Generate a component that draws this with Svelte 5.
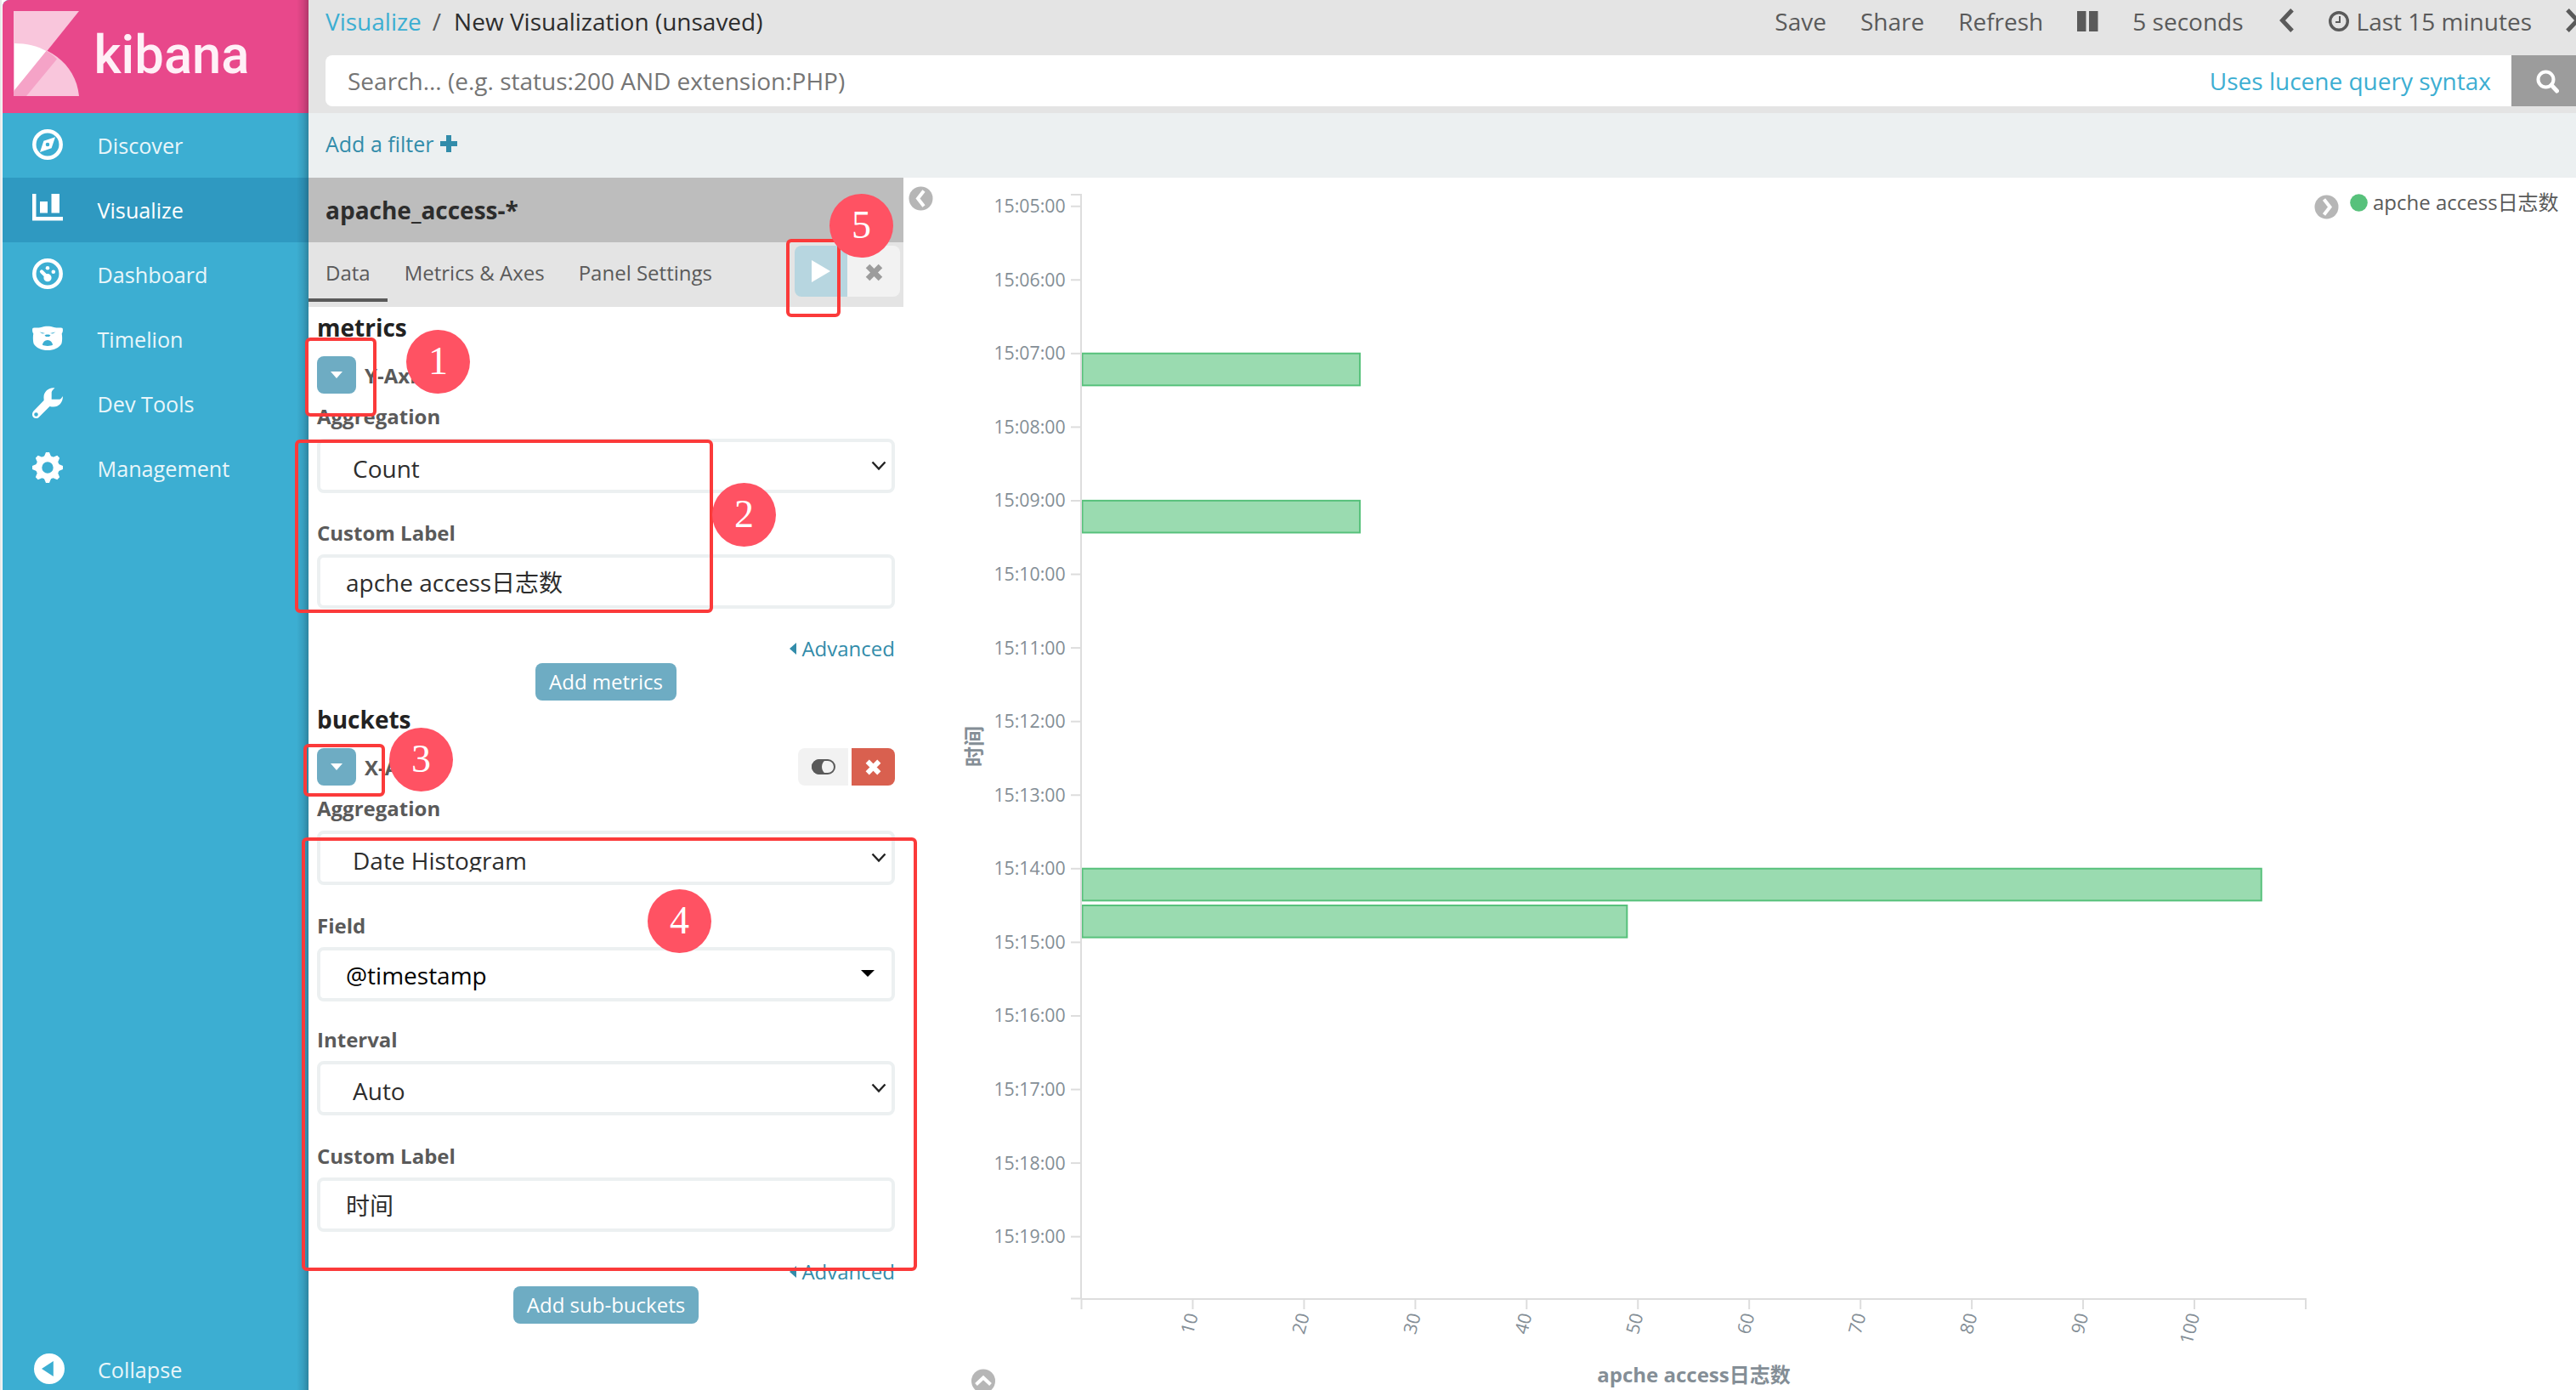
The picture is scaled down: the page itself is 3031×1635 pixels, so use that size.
<script>
  const nav = ['Discover', 'Visualize', 'Dashboard', 'Timelion', 'Dev Tools', 'Management'];
  const teeth = [0, 45, 90, 135, 180, 225, 270, 315];

  const times = Array.from({ length: 15 }, (_, i) => ({
    label: `15:${String(i + 5).padStart(2, '0')}:00`,
    y: 242.7 + i * 86.57
  }));
  const counts = Array.from({ length: 10 }, (_, i) => (i + 1) * 10);
  const countX = (n) => 1272.5 + n * 13.095;
  const bars = [
    { minute: 7, count: 25 },
    { minute: 9, count: 25 },
    { minute: 14, count: 106 },
    { minute: 14.5, count: 49 }
  ].map((b) => ({ y: 242.7 + (b.minute - 5) * 86.57 - 0.1, w: countX(b.count) - 1273 - 0.3 }));

  const frames = [
    { x: 359, y: 397, w: 84, h: 93 },
    { x: 347, y: 517, w: 492, h: 204 },
    { x: 357, y: 875, w: 96, h: 62 },
    { x: 355, y: 985, w: 724, h: 510 },
    { x: 925, y: 281, w: 64, h: 92 }
  ];
  const steps = [
    { n: 1, x: 478, y: 387.5 },
    { n: 2, x: 838, y: 567.5 },
    { n: 3, x: 458, y: 855.5 },
    { n: 4, x: 762, y: 1045.5 },
    { n: 5, x: 976, y: 227.5 }
  ];
</script>

{#snippet caret()}
  <button class="caret-btn" aria-label="toggle">
    <svg width="14" height="8" viewBox="0 0 14 8"><path d="M0 0h14L7 8z" fill="#fff" /></svg>
  </button>
{/snippet}

{#snippet select(value)}
  <div class="field select">
    <span>{value}</span>
    <svg width="18" height="12" viewBox="0 0 18 12"><path d="M1.500 1.500L9 9.500l7.500-8" fill="none" stroke="#222" stroke-width="2.400" /></svg>
  </div>
{/snippet}

{#snippet cross(color, size)}
  <svg width={size} height={size} viewBox="0 0 20 20"><path d="M3.500 3.500l13 13M16.500 3.500l-13 13" stroke={color} stroke-width="5.600" stroke-linecap="butt" /></svg>
{/snippet}

{#snippet advanced()}
  <div class="advanced">
    <svg width="8" height="14" viewBox="0 0 8 14"><path d="M8 0v14L0 7z" fill="#328caa" /></svg>
    <span>Advanced</span>
  </div>
{/snippet}

<div class="page">
  <aside class="sidebar">
    <div class="brand">
      <svg width="360" height="133" viewBox="0 0 360 133">
        <path d="M13 13h77L13 109z" fill="#f9c6dc" />
        <path d="M13 51c38 0 73 22 77 62H13z" fill="#f9c6dc" />
        <path d="M14 51c14 0 27 3 37.500 9L14 106z" fill="#fff" />
        <path d="M51.500 60c5 2.500 9 5.500 12.500 9.500L28 113H13v-5.500z" fill="#f5a3c7" />
        <text x="107.500" y="86" class="wordmark" textLength="183" lengthAdjust="spacingAndGlyphs">kibana</text>
      </svg>
    </div>
    {#each nav as item}
      <div class="nav-item" class:active={item === 'Visualize'}>
        <svg width="36" height="36" viewBox="0 0 36 36" fill="#fff">
          {#if item === 'Discover'}
            <circle cx="18" cy="18" r="15.700" fill="none" stroke="#fff" stroke-width="4.500" />
            <path fill-rule="evenodd" d="M27 9.200L22.600 22.300 9 27l4.400-13.300zM18 15.700a2.300 2.300 0 1 0 0 4.600 2.300 2.300 0 0 0 0-4.600z" />
          {:else if item === 'Visualize'}
            <path d="M0 0h4.500v27H36v4.500H0zM9 9h9v13.500H9zM22.500 0H32v22.500h-9.500z" />
          {:else if item === 'Dashboard'}
            <circle cx="18" cy="18" r="15.700" fill="none" stroke="#fff" stroke-width="4.500" />
            <circle cx="18" cy="11.200" r="2.300" />
            <circle cx="24.800" cy="15.700" r="2.300" />
            <circle cx="18" cy="22.700" r="4.600" />
            <path d="M11 15.500l7 7" stroke="#fff" stroke-width="4.200" stroke-linecap="round" />
          {:else if item === 'Timelion'}
            <path fill-rule="evenodd" d="M.5 6C2 5 7 6 10.500 5c4.500-1.800 10.500-1.800 15 0C29 6 34 5 35.500 6c.8 1.500.6 4.500-.8 6.500.6 3 .7 8-.2 11.500C31.500 29.500 25 32 18 32S4.500 29.500 1.500 24c-.9-3.500-.8-8.500-.2-11.500C-.1 10.500-.3 7.500.5 6zM8.500 10.500l3.500 2 3-.5zM27.500 10.500l-3.500 2-3-.5zM14.500 14.200l1.500 1.800h4l1.500-1.800-2-.700h-3zM18 20c-3 0-6 3-6 5.800 2 1.500 10 1.500 12 0 0-2.800-3-5.800-6-5.800z" />
          {:else if item === 'Dev Tools'}
            <path fill-rule="evenodd" d="M26.500.3C19-.9 13 5 13.500 12c0 1.500.3 2.500.1 3L1.500 27.500C-1.500 31 0 36 4.500 36c1.500 0 2.600-.5 3.500-1.500L20.500 22c1.500.4 2.700.6 4.500.6 6 0 11-5 11-12.600-1.800 2.500-2.600 3.500-4 3.800h-9.300V5.500c.3-2 2.200-3.500 3.800-5.200zM4.500 29.200a2.300 2.300 0 1 1 0 4.600 2.300 2.300 0 0 1 0-4.600z" />
          {:else}
            <circle cx="18" cy="18" r="10.300" fill="none" stroke="#fff" stroke-width="7.200" />
            {#each teeth as angle}
              <path transform="rotate({angle} 18 18)" d="M13.500 6L16 0h4l2.500 6z" />
            {/each}
          {/if}
        </svg>
        <span>{item}</span>
      </div>
    {/each}
    <div class="nav-item collapse">
      <svg width="36" height="36" viewBox="0 0 36 36"><circle cx="18" cy="18" r="18" fill="#fff" /><path d="M22.800 9v18L9 18z" fill="#3caed2" /></svg>
      <span>Collapse</span>
    </div>
  </aside>

  <main>
    <header>
      <div class="top-row">
        <a class="crumb">Visualize</a><span class="slash">/</span><span class="current">New Visualization (unsaved)</span>
        <div class="tools">
          <span>Save</span>
          <span>Share</span>
          <span>Refresh</span>
          <svg width="25" height="24" viewBox="0 0 25 24"><path d="M0 0h10.500v24H0zM14 0h10.500v24H14z" fill="#5a5a5a" /></svg>
          <span>5 seconds</span>
          <svg class="chev" width="20" height="28" viewBox="0 0 20 28"><path d="M17 1.800L5.500 14 17 26.200" fill="none" stroke="#5a5a5a" stroke-width="5" /></svg>
          <span class="range">
            <svg width="24" height="24" viewBox="0 0 24 24" fill="none" stroke="#5a5a5a"><circle cx="12" cy="12" r="10.300" stroke-width="3.400" /><path d="M13 6v7H8" stroke-width="2" /></svg>
            Last 15 minutes
          </span>
          <svg class="chev" width="20" height="28" viewBox="0 0 20 28"><path d="M2 1.800L13.500 14 2 26.200" fill="none" stroke="#5a5a5a" stroke-width="5" /></svg>
        </div>
      </div>
      <div class="search">
        <div class="query"><span>Search... (e.g. status:200 AND extension:PHP)</span><a>Uses lucene query syntax</a></div>
        <button aria-label="search">
          <svg width="28" height="28" viewBox="0 0 28 28" fill="none" stroke="#fff"><circle cx="12.500" cy="11.500" r="9" stroke-width="4" /><path d="M19 18l6.500 7" stroke-width="5" stroke-linecap="round" /></svg>
        </button>
      </div>
    </header>
    <div class="filters">
      <a>Add a filter</a>
      <svg width="20" height="20" viewBox="0 0 20 20"><path d="M7 0h6v7h7v6h-7v7H7v-7H0V7h7z" fill="#328caa" /></svg>
    </div>

    <div class="work">
      <section class="editor">
        <h1>apache_access-*</h1>
        <div class="tabs">
          <span class="tab selected">Data</span>
          <span class="tab">Metrics &amp; Axes</span>
          <span class="tab">Panel Settings</span>
          <div class="actions">
            <button class="play" aria-label="apply"><svg width="22" height="26" viewBox="0 0 22 26"><path d="M0 0l22 13L0 26z" fill="#fff" /></svg></button>
            <button class="discard" aria-label="discard">{@render cross('#9c9c9c', 23)}</button>
          </div>
        </div>
        <div class="form">
          <h2 class="first">metrics</h2>
          <div class="agg">{@render caret()}<b>Y-Axis</b></div>
          <label class="agg-label">Aggregation</label>
          {@render select('Count')}
          <label class="gap-20">Custom Label</label>
          <div class="field"><span>apche access日志数</span></div>
          {@render advanced()}
          <button class="add">Add metrics</button>
          <h2>buckets</h2>
          <div class="agg second">
            {@render caret()}<b>X-Axis</b>
            <div class="agg-actions">
              <button class="toggle" aria-label="disable"><svg width="28" height="18" viewBox="0 0 28 18"><rect x="1" y="1" width="26" height="16" rx="8" fill="#f2f2f2" stroke="#5a5a5a" stroke-width="2" /><path d="M18 0H9a9 9 0 0 0 0 18h9c-8-3-8-15 0-18z" fill="#5a5a5a" /></svg></button>
              <button class="remove" aria-label="remove">{@render cross('#fff', 21)}</button>
            </div>
          </div>
          <label class="agg-label">Aggregation</label>
          {@render select('Date Histogram')}
          <label class="gap-21">Field</label>
          <div class="field combo">
            <span>@timestamp</span>
            <svg width="16" height="8" viewBox="0 0 16 8"><path d="M0 0h16L8 8z" fill="#000" /></svg>
          </div>
          <label class="gap-18">Interval</label>
          {@render select('Auto')}
          <label class="gap-21">Custom Label</label>
          <div class="field"><span>时间</span></div>
          {@render advanced()}
          <button class="add">Add sub-buckets</button>
        </div>
      </section>

      <svg class="chart" width="1968" height="1426" viewBox="1063 209 1968 1426">
        <g fill="none" stroke="#fff" stroke-width="4">
          <circle cx="1083.500" cy="233.500" r="14" fill="#b6b6b6" stroke="none" />
          <path d="M1087 224.500l-7 9 7 9" />
          <circle cx="2737.500" cy="243.500" r="14" fill="#b6b6b6" stroke="none" />
          <path d="M2734.500 234.500l7 9-7 9" />
          <circle cx="1157" cy="1624.500" r="14" fill="#b6b6b6" stroke="none" />
          <path d="M1148.500 1628.500l8.500-8 8.500 8" />
        </g>
        <circle cx="2775.500" cy="238.500" r="10.300" fill="#57c17b" />
        <text x="2792" y="247" class="legend">apche access日志数</text>

        <g fill="#9adbb0" stroke="#57c17b" stroke-width="2">
          {#each bars as bar}
            <rect x="1273.500" y={bar.y} width={bar.w} height="37.600" />
          {/each}
        </g>
        <path d="M1260 229h12v1298.500h-12M1272 1528h1441v12M1272.500 1528v12" fill="none" stroke="#ddd" stroke-width="2" />
        {#each times as t}
          <path d="M1260 {t.y}h12" stroke="#ddd" stroke-width="2" />
          <text x="1253.700" y={t.y + 7.5} text-anchor="end" class="tick">{t.label}</text>
        {/each}
        {#each counts as n}
          <path d="M{countX(n)} 1528v12" stroke="#ddd" stroke-width="2" />
          <text text-anchor="end" dy="7.500" class="tick" transform="translate({countX(n) - 0.8} 1545) rotate(-75)">{n}</text>
        {/each}
        <text text-anchor="middle" class="axis-title" transform="translate(1155 878) rotate(-90)">时间</text>
        <text x="1993" y="1626" text-anchor="middle" class="axis-title">apche access日志数</text>
      </svg>
    </div>
  </main>

  {#each frames as f}
    <div class="frame" style="left:{f.x}px;top:{f.y}px;width:{f.w}px;height:{f.h}px"></div>
  {/each}
  {#each steps as s}
    <div class="step" style="left:{s.x}px;top:{s.y}px">{s.n}</div>
  {/each}
</div>

<style>
  .page {
    position: relative;
    display: flex;
    width: 3031px;
    height: 1635px;
    overflow: hidden;
    background: #fff;
    color: #2d2d2d;
    font-family: 'Open Sans', 'Noto Sans CJK SC', sans-serif;
    font-size: 28px;
    box-sizing: border-box;
    padding-left: 3px;
    box-shadow: inset 2px 0 0 #e8eaea;
  }
  .page * { box-sizing: border-box; }
  button {
    display: flex;
    align-items: center;
    justify-content: center;
    border: 0;
    padding: 0;
    font-family: inherit;
    color: #fff;
  }
  svg { display: block; flex: none; }
  .sidebar {
    display: flex;
    flex-direction: column;
    width: 360px;
    flex: none;
    background: linear-gradient(to left, rgba(0, 0, 0, 0.24), rgba(0, 0, 0, 0.1) 6px, transparent 14px), #3caed2;
    border-radius: 8px 0 0 0;
    overflow: hidden;
  }
  .brand {
    height: 133px;
    background: linear-gradient(to left, rgba(0, 0, 0, 0.24), rgba(0, 0, 0, 0.1) 6px, transparent 14px), #e8488b;
  }
  .wordmark { font-family: Roboto, sans-serif; font-weight: 500; font-size: 63px; fill: #fff0f7; }
  .nav-item {
    display: flex;
    align-items: center;
    gap: 40.5px;
    height: 76px;
    padding: 0 0 0 35px;
    font-size: 25.2px;
    color: #e9f6fa;
  }
  .nav-item svg { margin-bottom: 2px; }
  .active {
    background: linear-gradient(to left, rgba(0, 0, 0, 0.24), rgba(0, 0, 0, 0.1) 6px, transparent 14px), #2f99c1;
    color: #fff;
  }
  .collapse { margin-top: auto; margin-bottom: -14px; padding-left: 37px; gap: 39px; }
  main { display: flex; flex-direction: column; flex: 1; min-width: 0; }
  header { height: 133px; flex: none; background: #e4e4e4; }
  .top-row { display: flex; align-items: center; height: 50px; padding-left: 20px; white-space: nowrap; }
  .crumb { color: #3caed2; }
  .slash { margin: 0 15px 0 13px; color: #5a5a5a; }
  .tools { display: flex; align-items: center; gap: 40px; margin-left: auto; margin-right: -8px; color: #5a5a5a; }
  .chev { margin-top: -2px; }
  .range { display: flex; align-items: center; gap: 9px; }
  .search { display: flex; height: 60px; margin-top: 15px; padding-left: 20px; }
  .query {
    display: flex;
    flex: 1;
    align-items: center;
    justify-content: space-between;
    padding: 0 24px 1px 26px;
    background: #fff;
    border-radius: 8px 0 0 8px;
    color: #757575;
  }
  .query a { color: #3caed2; }
  .search button { width: 76px; background: #9c9c9c; padding: 2px 0 0 8px; }
  .filters {
    display: flex;
    align-items: center;
    gap: 8px;
    height: 76px;
    flex: none;
    padding: 0 0 4px 20px;
    background: #ecf0f1;
    color: #328caa;
    font-size: 25px;
  }
  .work { display: flex; flex: 1; min-height: 0; }
  .editor { width: 700px; flex: none; }
  h1 { margin: 0; height: 76px; padding-left: 20px; background: #bdbdbd; font-size: 28px; line-height: 76px; }
  .tabs { display: flex; height: 76px; background: #e4e4e4; color: #5a5a5a; font-size: 24px; }
  .tab { height: 70px; padding: 0 20px; line-height: 71px; border-bottom: 4px solid transparent; }
  .selected { border-color: #5a5a5a; }
  .actions { display: flex; margin: 4px 4px 0 auto; height: 60px; border-radius: 8px; overflow: hidden; }
  .actions button { width: 62px; }
  .play { background: #b7d6e0; }
  .discard { background: #f2f2f2; }
  .actions .discard { padding-top: 2px; }
  .form { display: flex; flex-direction: column; padding: 0 10px; }
  h2 { margin: 0; height: 44px; font-size: 28px; line-height: 45px; color: #222; }
  .first { height: 48px; line-height: 49px; }
  .agg { display: flex; align-items: center; gap: 10px; height: 44px; margin-top: 10px; font-size: 24px; color: #5a5a5a; }
  .second { margin-top: 12px; }
  .caret-btn { width: 46px; height: 44px; border-radius: 8px; background: #6eacc3; }
  .agg-actions { display: flex; gap: 4px; margin-left: auto; }
  .toggle { width: 59px; height: 44px; background: #f2f2f2; border-radius: 8px 0 0 8px; }
  .remove { width: 51px; height: 44px; background: #d9604f; border-radius: 0 8px 8px 0; }
  label { height: 52px; line-height: 53px; font-size: 24px; font-weight: 700; color: #5a5a5a; }
  .agg-label { height: 53px; line-height: 53px; }
  .gap-18 { margin-top: 18px; }
  .gap-20 { margin-top: 20px; }
  .gap-21 { margin-top: 21px; }
  .field {
    display: flex;
    align-items: center;
    justify-content: space-between;
    height: 64px;
    padding: 2px 0 0 30px;
    border: 4px solid #ecf0f1;
    border-radius: 8px;
    line-height: 38px;
  }
  .select { padding: 5px 6px 0 38px; }
  .select span { clip-path: inset(0 0 5px 0); }
  .select svg { margin-bottom: 5px; }
  .combo { padding-right: 20px; color: #000; }
  .combo svg { margin-bottom: 5px; }
  .advanced {
    display: flex;
    align-items: center;
    justify-content: flex-end;
    gap: 6px;
    height: 35px;
    margin-top: 29px;
    font-size: 24px;
    color: #328caa;
  }
  .add { align-self: center; height: 44px; padding: 0 16px 1px; border-radius: 8px; background: #6eacc3; font-size: 24px; }
  .legend { font-size: 24px; fill: #5a5a5a; }
  .tick { font-size: 21.3px; fill: #848e96; }
  .axis-title { font-size: 24px; font-weight: 700; fill: #848e96; }
  .frame { position: absolute; border: 4px solid #fb3a3a; border-radius: 6px; }
  .step {
    position: absolute;
    width: 75px;
    height: 75px;
    border-radius: 50%;
    background: #ff5263;
    color: #fff;
    font: 46px/73px 'Liberation Serif', serif;
    text-align: center;
  }
</style>
